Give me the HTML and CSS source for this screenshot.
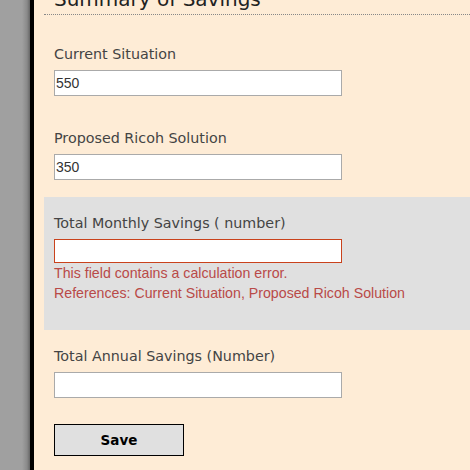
FILE: index.html
```html
<!DOCTYPE html>
<html>
<head>
<meta charset="utf-8">
<link rel="stylesheet" href="styles.css">
</head>
<body>
<div class="page">
  <div class="gutter"></div>
  <main class="panel">
    <h2 class="title">Summary of Savings</h2>
    <div class="field">
      <label class="label">Current Situation</label>
      <input class="input" type="text" value="550">
    </div>
    <div class="field">
      <label class="label">Proposed Ricoh Solution</label>
      <input class="input" type="text" value="350">
    </div>
    <div class="field field-error">
      <label class="label">Total Monthly Savings ( number)</label>
      <input class="input input-error" type="text" value="">
      <div class="error-text">This field contains a calculation error.</div>
      <div class="error-text">References: Current Situation, Proposed Ricoh Solution</div>
    </div>
    <div class="field">
      <label class="label">Total Annual Savings (Number)</label>
      <input class="input" type="text" value="">
    </div>
    <div class="actions">
      <button class="btn" type="button">Save</button>
    </div>
  </main>
</div>
</body>
</html>
```

FILE: styles.css
```css
html, body {
  margin: 0;
  padding: 0;
  height: 100%;
  overflow: hidden;
}
body {
  background: #a0a0a0;
  font-family: "DejaVu Sans", Verdana, sans-serif;
}
.page {
  display: flex;
  height: 470px;
}
.gutter {
  width: 30px;
  flex: none;
  background: linear-gradient(to right, #a0a0a0 0, #a0a0a0 22px, #8a8a8a 27px, #666 30px);
}
.panel {
  flex: 1;
  background: #feecd6;
  border-left: 4px solid #000;
  padding-left: 10px;
}
.title {
  margin: -14px 0 0 0;
  padding: 0 0 2px 10px;
  font-size: 20px;
  line-height: 26px;
  font-weight: normal;
  color: #222;
  border-bottom: 1px dotted #888;
}
.field {
  display: flex;
  flex-direction: column;
  align-items: flex-start;
  padding: 31px 0 0 10px;
}
.field + .field {
  padding-top: 34px;
}
.label {
  font-size: 14.3px;
  line-height: 16px;
  color: #444;
  margin-bottom: 8px;
}
.input {
  box-sizing: border-box;
  width: 288px;
  height: 26px;
  margin: 0;
  border: 1px solid #aaa;
  background: #fff;
  padding: 0 1px;
  font-family: "Liberation Sans", Arial, sans-serif;
  font-size: 14px;
  color: #333;
  outline: none;
}
.field-error {
  background: #e0e0e0;
  margin-top: 17px;
}
.field + .field-error {
  padding: 18px 0 27px 10px;
}
.field-error + .field {
  padding-top: 18px;
}
.input-error {
  height: 24px;
  border-color: #c9421c;
}
.error-text {
  font-family: "Liberation Sans", Arial, sans-serif;
  font-size: 14.2px;
  line-height: 20px;
  color: #b94a48;
}
.actions {
  padding: 26px 0 0 10px;
}
.btn {
  box-sizing: border-box;
  width: 130px;
  height: 32px;
  background: #e0e0e0;
  border: 1px solid #000;
  border-radius: 0;
  font-family: "DejaVu Sans", Verdana, sans-serif;
  font-weight: bold;
  font-size: 13.5px;
  color: #000;
  padding: 0;
}
```
